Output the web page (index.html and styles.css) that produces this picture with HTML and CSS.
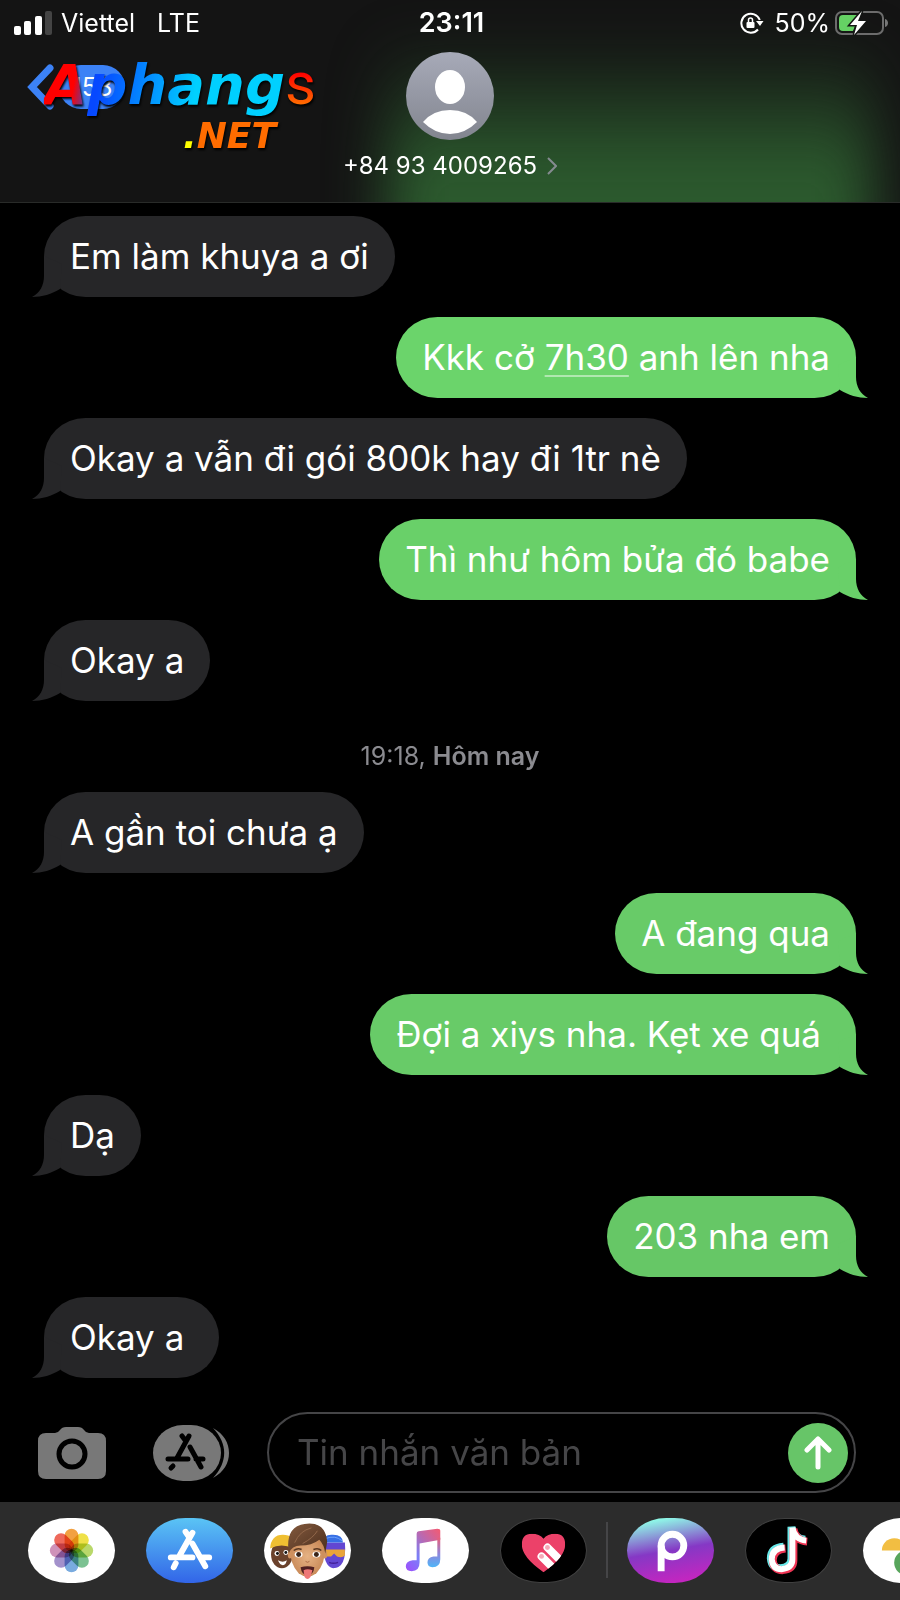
FILE: index.html
```html
<!DOCTYPE html>
<html lang="vi">
<head>
<meta charset="utf-8">
<meta name="viewport" content="width=device-width, initial-scale=1">
<title>Tin nhắn</title>
<link rel="stylesheet" href="styles.css">
</head>
<body>
<svg class="defs" aria-hidden="true">
  <defs>
    <symbol id="tail" viewBox="0 0 30 41"><path d="M12 0V20C12 29 8 37 0 41C10 41 20 38 28 33L30 8Z"/></symbol>
    <linearGradient id="noteFill" x1="0" y1="1" x2="1" y2="0"><stop offset="0" stop-color="#a04dfc"/><stop offset=".35" stop-color="#7a80f8"/><stop offset=".6" stop-color="#b26bb9"/><stop offset="1" stop-color="#f55a70"/></linearGradient>
    <linearGradient id="noteRight" x1="0" y1="0" x2="0" y2="1"><stop offset="0" stop-color="#e95e76"/><stop offset=".55" stop-color="#8e86dc"/><stop offset="1" stop-color="#4eb5f8"/></linearGradient>
    <radialGradient id="skin"><stop offset="0" stop-color="#e6b284"/><stop offset="1" stop-color="#c98a58"/></radialGradient>
    <linearGradient id="hair" x1="0" y1="0" x2="1" y2="1"><stop offset="0" stop-color="#83593d"/><stop offset="1" stop-color="#4a2e1d"/></linearGradient>
  </defs>
</svg>
<div class="phone">
  <header class="header">
    <div class="status">
      <div class="status-left">
        <svg class="signal" viewBox="0 0 38 24" fill="#fff"><rect x="0" y="15" width="7" height="9" rx="2"/><rect x="10" y="10" width="7" height="14" rx="2"/><rect x="21" y="5" width="7" height="19" rx="2"/><rect x="31" y="0" width="7" height="24" rx="2" fill="#444"/></svg>
        <span>Viettel</span><span class="network">LTE</span>
      </div>
      <time class="clock">23:11</time>
      <div class="status-right">
        <svg class="lock" viewBox="0 0 24 22" fill="none" stroke="#fff" stroke-width="2"><path d="M18 17.500A9.500 9.500 0 1 1 19.800 8"/><path d="M16 9h7.500l-3.500 5z" fill="#fff" stroke="none"/><rect x="6.500" y="10" width="8" height="6" rx="1" fill="#fff" stroke="none"/><path d="M8.500 10V8a2 2 0 0 1 4 0v2" stroke-width="1.500"/></svg>
        <span>50%</span>
        <svg class="battery" viewBox="0 0 54 26"><rect x="1" y="2" width="47" height="22" rx="6" fill="none" stroke="#6c6c6c" stroke-width="2"/><path d="M50 9c4 1 4 7 0 8z" fill="#777"/><path d="M8 5H24L14 16H20L18 21H8a4 4 0 0 1-4-4V9a4 4 0 0 1 4-4Z" fill="#65d164"/><path d="M27 1L15 15h7L19 25L31 11h-8z" fill="#fff" stroke="#141614" stroke-width="3" paint-order="stroke"/></svg>
      </div>
    </div>
    <div class="contact-row">
      <button class="back" aria-label="Quay lại">
        <svg class="back-arrow" viewBox="0 0 28 46" fill="none" stroke="#3c82f6" stroke-width="7" stroke-linecap="round" stroke-linejoin="miter"><path d="M23 4L5 23L23 42"/></svg>
        <span class="unread">153</span>
      </button>
      <div class="contact">
        <svg class="avatar" viewBox="0 0 88 88"><defs><linearGradient id="av" x1="0" y1="0" x2="0" y2="1"><stop offset="0" stop-color="#a7aab8"/><stop offset="1" stop-color="#82858f"/></linearGradient></defs><circle cx="44" cy="44" r="44" fill="url(#av)"/><ellipse cx="44" cy="35" rx="15" ry="17" fill="#fff"/><path d="M17 70Q27 58 44 58T71 70Q59 82 44 82T17 70Z" fill="#fff"/></svg>
        <a class="number" href="#contact">+84 93 4009265<svg class="more" viewBox="0 0 10 18" fill="none" stroke="#858b90" stroke-width="2"><path d="M1 1l8 8-8 8"/></svg></a>
      </div>
      <div class="watermark"><span class="mark-a">A</span><span class="mark-b">phang</span><span class="mark-s">s</span><div class="mark-net"><span class="dot">.</span>NET</div></div>
    </div>
  </header>

  <main class="thread">
    <p class="bubble in">Em làm khuya a ơi<svg class="tail"><use href="#tail"/></svg></p>
    <p class="bubble out g1">Kkk cở <a class="time-link" href="#time">7h30</a> anh lên nha<svg class="tail"><use href="#tail"/></svg></p>
    <p class="bubble in">Okay a vẫn đi gói 800k hay đi 1tr nè<svg class="tail"><use href="#tail"/></svg></p>
    <p class="bubble out g2">Thì như hôm bửa đó babe<svg class="tail"><use href="#tail"/></svg></p>
    <p class="bubble in">Okay a<svg class="tail"><use href="#tail"/></svg></p>
    <p class="stamp">19:18, <b>Hôm nay</b></p>
    <p class="bubble in">A gần toi chưa ạ<svg class="tail"><use href="#tail"/></svg></p>
    <p class="bubble out g3">A đang qua<svg class="tail"><use href="#tail"/></svg></p>
    <p class="bubble out g3 spaced">Đợi a xiys nha. Kẹt xe quá<svg class="tail"><use href="#tail"/></svg></p>
    <p class="bubble in">Dạ<svg class="tail"><use href="#tail"/></svg></p>
    <p class="bubble out g4">203 nha em<svg class="tail"><use href="#tail"/></svg></p>
    <p class="bubble in spaced">Okay a<svg class="tail"><use href="#tail"/></svg></p>
  </main>

  <form class="composer">
    <button class="tool" type="button" aria-label="Máy ảnh"><svg class="camera" viewBox="0 0 68 52"><path d="M8 6H17Q20 6 22 3Q24 0 28 0H40Q44 0 46 3Q48 6 51 6H60Q68 6 68 14V44Q68 52 60 52H8Q0 52 0 44V14Q0 6 8 6Z" fill="#787878"/><circle cx="34" cy="27" r="13" fill="none" stroke="#000" stroke-width="5"/></svg></button>
    <button class="tool" type="button" aria-label="Ứng dụng"><svg class="apps" viewBox="0 0 76 56"><path d="M60 3C71 9 76 18 76 28S71 47 60 53C75 37 75 19 60 3Z" fill="#787878"/><rect width="68" height="56" rx="30" ry="28" fill="#787878"/><g stroke="#000" stroke-width="5" stroke-linecap="round" fill="none"><path d="M36 11L24 33M29 11l3 4M15 34H35M20 41l-2 2M37 22L48 42M43 34h7"/></g></svg></button>
    <div class="field">
      <input class="text" type="text" placeholder="Tin nhắn văn bản" aria-label="Tin nhắn văn bản">
      <button class="send" type="button" aria-label="Gửi"><svg class="arrow" viewBox="0 0 28 34" fill="none" stroke="#fff" stroke-width="5" stroke-linecap="round" stroke-linejoin="round"><path d="M14 31V3M3 14L14 3l11 11"/></svg></button>
    </div>
  </form>

  <nav class="drawer" aria-label="Ứng dụng iMessage">
    <button class="app white" aria-label="Ảnh"><svg class="glyph" viewBox="0 0 88 66"><g class="petals">
      <rect x="37" y="11" width="14" height="23" rx="7" fill="#f2a142"/>
      <rect x="37" y="11" width="14" height="23" rx="7" fill="#efe148" transform="rotate(45 44 33)"/>
      <rect x="37" y="11" width="14" height="23" rx="7" fill="#b9d86a" transform="rotate(90 44 33)"/>
      <rect x="37" y="11" width="14" height="23" rx="7" fill="#7cc292" transform="rotate(135 44 33)"/>
      <rect x="37" y="11" width="14" height="23" rx="7" fill="#79abdf" transform="rotate(180 44 33)"/>
      <rect x="37" y="11" width="14" height="23" rx="7" fill="#a391cb" transform="rotate(225 44 33)"/>
      <rect x="37" y="11" width="14" height="23" rx="7" fill="#cf92b9" transform="rotate(270 44 33)"/>
      <rect x="37" y="11" width="14" height="23" rx="7" fill="#ee695b" transform="rotate(315 44 33)"/></g></svg></button>
    <button class="app store" aria-label="App Store"><svg class="glyph" viewBox="0 0 88 66"><g stroke="#fff" stroke-width="6" stroke-linecap="round" fill="none"><path d="M47 15L34 38M40 14l4 6M25 40H47M30 46l-2 4M47 26L60 49M56 40h8"/></g></svg></button>
    <button class="app white" aria-label="Memoji"><svg class="glyph" viewBox="0 0 88 66">
      <ellipse cx="18" cy="37" rx="11" ry="14" fill="#6b422c"/><path d="M6 31Q7 17 19 17T31 28L29 31Q18 25 6 31Z" fill="#efbf32"/><circle cx="13" cy="36" r="2.500" fill="#fff"/><circle cx="13.500" cy="36" r="1.500" fill="#111"/><circle cx="22" cy="35" r="2.500" fill="#fff"/><circle cx="22" cy="35" r="1.500" fill="#111"/><path d="M14 43q5 3 9 0q-1 5-4 5t-5-5z" fill="#fff"/>
      <path d="M60 25H82Q84 51 70 51Q60 50 60 25Z" fill="#6247d2"/><path d="M60 25Q60 16 70 17Q80 17 80 25Z" fill="#376fe5"/><path d="M62 21q10-4 17 2" stroke="#6ca1fa" fill="none"/><path d="M60 32H82V38Q79 41 74 39L71 36L68 39H60Z" fill="#e9a43a"/><path d="M66 45q4 2 9 0" stroke="#43219a" stroke-width="1.500" fill="none"/>
      <path d="M26 30Q26 18 44 18T62 30Q62 47 53 56Q44 63 35 56Q26 47 26 30Z" fill="url(#skin)"/><ellipse cx="26" cy="37" rx="2" ry="4" fill="#d0925f"/><ellipse cx="62" cy="37" rx="2" ry="4" fill="#d0925f"/>
      <path d="M25 36Q21 9 41 6Q62 3 64 24L62 36Q61 27 56 22Q48 28 37 28Q28 28 25 36Z" fill="url(#hair)"/><path d="M31 25Q36 13 48 10M39 26Q50 20 54 13" stroke="#93694b" fill="none"/>
      <ellipse cx="35" cy="37" rx="4" ry="3" fill="#fff"/><circle cx="35" cy="37" r="2.500" fill="#3a2418"/><ellipse cx="53" cy="37" rx="4" ry="3" fill="#fff"/><circle cx="53" cy="37" r="2.500" fill="#3a2418"/><path d="M30 33q4-3 8-1M50 32q5-2 8 1" stroke="#583721" stroke-width="1.500" fill="none"/><path d="M42 44q2 2 4 0" stroke="#ad6b45" fill="none"/><path d="M37 50Q44 48 51 50Q50 58 44 58T37 50Z" fill="#512021"/><path d="M40 53Q44 51 49 53L47 60Q44 64 41 60Z" fill="#ee7777"/></svg></button>
    <button class="app white" aria-label="Nhạc"><svg class="glyph" viewBox="0 0 88 66"><path d="M35 16Q35 14 37 13.500L56 11Q59 11 59 13V22L38 26V45Q38 54 30 54Q24 54 24 49T31 43H35Z" fill="url(#noteFill)"/><path d="M56 20H59V42Q59 50 51 50Q46 50 46 45T52 39H56Z" fill="url(#noteRight)"/></svg></button>
    <button class="app black" aria-label="Digital Touch"><svg class="glyph" viewBox="0 0 88 66"><defs><clipPath id="heart"><path d="M44 55Q22 40 22 27Q22 16 32 16Q40 16 44 21Q48 16 56 16Q66 16 66 27Q66 40 44 55Z"/></clipPath></defs><g clip-path="url(#heart)"><path d="M20 14H68V56H20Z" fill="#ec4169"/><g stroke="#fff" stroke-width="8" stroke-linecap="round"><path d="M48 30L64 46M42 39L56 53"/></g></g><circle cx="48" cy="30" r="2.500" fill="#f6a9b8"/><circle cx="42" cy="39" r="2.500" fill="#f6a9b8"/></svg></button>
    <span class="divider"></span>
    <button class="app picsart" aria-label="Picsart"><svg class="glyph" viewBox="0 0 88 66"><g fill="none" stroke="#fff" stroke-width="7"><circle cx="46" cy="28" r="11.500"/><path d="M34.500 28V54"/></g></svg></button>
    <button class="app black" aria-label="TikTok"><svg class="glyph" viewBox="0 0 88 66"><g fill="none" stroke-width="8"><path d="M39 29Q26 30 26 41Q27 51 36 51Q47 50 47 41V9Q49 21 61 22" stroke="#69e8e9"/><path d="M41 31Q28 32 28 43Q29 53 38 53Q49 52 49 43V11Q51 23 63 24" stroke="#ee3554"/><path d="M40 30Q27 31 27 42Q28 52 37 52Q48 51 48 42V10Q50 22 62 23" stroke="#fff" stroke-width="6"/></g></svg></button>
    <button class="app white" aria-label="Ảnh Google"><svg class="glyph" viewBox="0 0 88 66"><path d="M19 33a12.500 12.500 0 0 1 25 0z" fill="#f2be42"/><path d="M44 33v25a12.500 12.500 0 0 1 0-25z" fill="#58a55c"/></svg></button>
  </nav>
</div>
</body>
</html>
```
FILE: styles.css
```css
* { box-sizing: border-box; }
body { margin: 0; background: #000; color: #fff; font-family: Inter, "Noto Sans", sans-serif; }
button { border: 0; padding: 0; background: none; color: inherit; font: inherit; flex: none; }
a { color: inherit; text-decoration: none; }
svg { display: block; flex: none; }
p { margin: 0; }
.defs { position: absolute; width: 0; height: 0; }
.phone { min-height: 100vh; display: flex; flex-direction: column; overflow: hidden; }

.header { position: relative; isolation: isolate; height: 203px; overflow: hidden; background: #141414; border-bottom: 1px solid #292b29; }
.header::before { content: ""; position: absolute; z-index: -1; left: 43%; right: 3%; top: 40px; height: 260px; background: linear-gradient(transparent, #2c5a2e 50%); filter: blur(28px); }
.status { display: grid; grid-template-columns: 1fr auto 1fr; align-items: center; height: 46px; padding: 0 11px 0 14px; font-size: 25px; line-height: 30px; }
.status-left, .status-right { display: flex; align-items: center; }
.status-right { justify-content: flex-end; gap: 5px; }
.signal { width: 38px; height: 24px; margin-right: 9px; }
.network { margin-left: 22px; }
.clock { font-size: 27px; font-weight: 600; }
.lock { width: 24px; height: 22px; margin-right: 5px; }
.battery { width: 54px; height: 26px; }
.contact-row { position: relative; display: grid; grid-template-columns: 1fr auto 1fr; align-items: start; padding-top: 6px; }
.back { display: flex; align-items: center; justify-self: start; margin: 12px 0 0 27px; }
.back-arrow { width: 28px; height: 46px; }
.unread { width: 66px; height: 44px; margin-left: 4px; border-radius: 22px; background: #3c82f6; font-size: 25px; line-height: 44px; text-align: center; }
.contact { display: flex; flex-direction: column; align-items: center; gap: 11px; }
.avatar { width: 88px; height: 88px; }
.number { display: flex; align-items: center; gap: 10px; font-size: 24px; line-height: 30px; }
.more { width: 10px; height: 18px; }
.watermark { position: absolute; left: 44px; top: 8px; font: italic bold 56px/60px "DejaVu Sans", sans-serif; filter: drop-shadow(1px 2px 1px #000); white-space: nowrap; }
.mark-a, .mark-b, .mark-s { color: transparent; background-clip: text; -webkit-background-clip: text; }
.mark-a { background-image: linear-gradient(100deg, #f00 65%, #2255dd); }
.mark-b { background-image: linear-gradient(100deg, #0648ff 8%, #00d0ff 55%); }
.mark-s { font: 60px/60px Roboto, sans-serif; background-image: linear-gradient(#f00 35%, #ff7a00 85%); }
.mark-net { margin-left: 139px; font-size: 36px; line-height: 42px; color: #ff6c00; }
.dot { color: #ff0; }

.thread { flex: 1; display: flex; flex-direction: column; align-items: flex-start; gap: 20px; padding: 13px 44px 20px; }
.bubble { position: relative; padding: 18px 26px; border-radius: 42px / 41px; font-size: 35px; line-height: 45px; }
.in { background: #262628; color: #fff; }
.out { align-self: flex-end; }
.g1 { background: #6bd46b; }
.g2 { background: #69d069; }
.g3 { background: #68cb68; }
.g4 { background: #66c766; }
.tail { position: absolute; left: -12px; bottom: 0; width: 30px; height: 41px; }
.in .tail { fill: #262628; }
.out .tail { left: auto; right: -12px; transform: scaleX(-1); }
.g1 .tail { fill: #6bd46b; }
.g2 .tail { fill: #69d069; }
.g3 .tail { fill: #68cb68; }
.g4 .tail { fill: #66c766; }
.spaced { padding-right: 35px; }
.time-link { text-decoration: underline 2px #b0e8b0; text-underline-offset: 5px; }
.stamp { align-self: center; margin: 20px 0 1px; font-size: 25px; line-height: 30px; color: #8b8b90; }
.stamp b { font-weight: 600; }

.composer { display: flex; align-items: center; padding: 0 44px 9px 38px; }
.tool { margin-right: 47px; }
.camera { width: 68px; height: 52px; }
.apps { width: 76px; height: 56px; }
.tool + .tool { margin-right: 38px; }
.field { flex: 1; min-width: 0; display: flex; align-items: center; height: 81px; border: 2px solid #454547; border-radius: 41px; padding: 0 6px 0 28px; }
.text { flex: 1; min-width: 0; border: 0; padding: 0; outline: 0; background: none; color: #fff; font: 35px/45px Inter, "Noto Sans", sans-serif; }
.text::placeholder { color: #464648; opacity: 1; }
.send { display: grid; place-items: center; width: 60px; height: 60px; border-radius: 50%; background: #67c568; }
.arrow { width: 28px; height: 34px; }

.drawer { display: flex; align-items: center; gap: 31px; height: 98px; padding: 0 0 2px 28px; background: #2c2c2c; overflow: hidden; }
.app { width: 87px; height: 65px; border-radius: 40px / 33px; overflow: hidden; }
.glyph { width: 87px; height: 65px; }
.white { background: #fff; }
.black { background: #000; border: 1px solid #404040; }
.black .glyph { margin: -1px; }
.store { background: linear-gradient(#5ac4f5, #3265e8); }
.picsart { background: linear-gradient(170deg, #8ffbe8 8%, #8538c5 50%, #c326c0 90%); }
.divider { flex: none; width: 2px; height: 56px; margin: 0 -12px; background: #454547; }
.petals { isolation: isolate; }
.petals rect { mix-blend-mode: multiply; }
```
